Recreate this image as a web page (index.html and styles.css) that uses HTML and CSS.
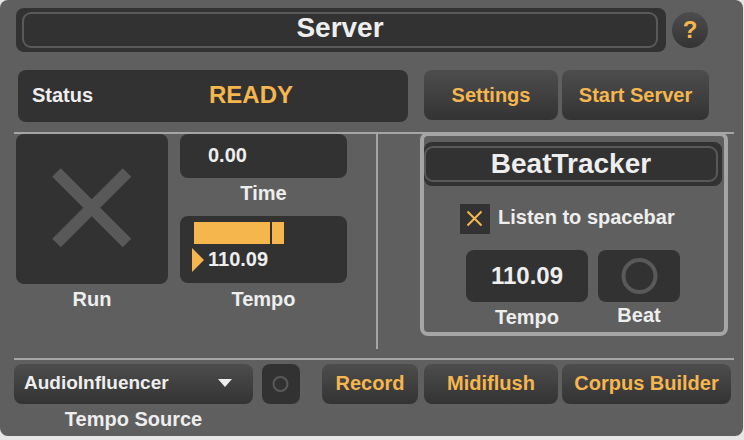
FILE: index.html
```html
<!DOCTYPE html>
<html lang="en">
<head>
<meta charset="utf-8">
<title>Server</title>
<link rel="stylesheet" href="styles.css">
</head>
<body>
<main class="panel">
  <header class="header">
    <div class="title"><h1 class="title-text server-text">Server</h1></div>
    <button class="button help" type="button" aria-label="Help">?</button>
  </header>

  <section class="status-row">
    <div class="status">
      <span class="status-label">Status</span>
      <output class="status-value">READY</output>
    </div>
    <button class="button medium" type="button">Settings</button>
    <button class="button start" type="button">Start Server</button>
  </section>

  <section class="body">
    <div class="run">
      <span class="toggle run-toggle">
        <input class="toggle-input" type="checkbox" id="run">
        <svg class="toggle-mark" viewBox="0 0 152 150" aria-hidden="true"><path d="M40.500 38.500L111 109M111 38.500L40.500 109" stroke="#595959" stroke-width="12"/></svg>
      </span>
      <label class="label" for="run">Run</label>
    </div>

    <div class="fields">
      <input class="number time" id="time" type="text" value="0.00">
      <label class="label time-label" for="time">Time</label>
      <div class="tempo">
        <div class="meter"><span class="meter-fill"></span><span class="meter-knob"></span></div>
        <div class="tempo-line">
          <svg class="tempo-arrow" viewBox="0 0 12 24" aria-hidden="true"><path d="M0 0L12 12L0 24Z" fill="#f6b64e"/></svg>
          <input class="number tempo-input" id="tempo" type="text" value="110.09">
        </div>
      </div>
      <label class="label" for="tempo">Tempo</label>
    </div>

    <div class="separator"></div>

    <section class="tracker">
      <div class="title tracker-title"><h2 class="title-text">BeatTracker</h2></div>
      <div class="listen">
        <span class="toggle listen-toggle">
          <input class="toggle-input" type="checkbox" id="listen" checked>
          <svg class="toggle-mark" viewBox="0 0 30 30" aria-hidden="true"><path d="M7.500 7.500L21.500 21.500M21.500 7.500L7.500 21.500" stroke="#f6b64e" stroke-width="2"/></svg>
        </span>
        <label class="listen-label" for="listen">Listen to spacebar</label>
      </div>
      <div class="beat-row">
        <div class="beat-tempo">
          <input class="number beat-input" id="beat-tempo" type="text" value="110.09">
          <label class="label" for="beat-tempo">Tempo</label>
        </div>
        <div class="beat">
          <button class="bang beat-bang" id="beat" type="button">
            <svg class="beat-ring" viewBox="0 0 36 36" aria-hidden="true"><circle cx="18.500" cy="18" r="16" fill="none" stroke="#595959" stroke-width="4"/></svg>
          </button>
          <label class="label beat-label" for="beat">Beat</label>
        </div>
      </div>
    </section>
  </section>

  <footer class="footer">
    <div class="source">
      <div class="source-box">
        <select class="source-select" id="source"><option>AudioInfluencer</option></select>
        <svg class="source-arrow" viewBox="0 0 14 8" aria-hidden="true"><path d="M0 0H14L7 8Z" fill="#eee"/></svg>
      </div>
      <label class="label" for="source">Tempo Source</label>
    </div>
    <button class="bang source-bang" type="button" aria-label="Refresh">
      <svg class="source-ring" viewBox="0 0 16 16" aria-hidden="true"><circle cx="7.500" cy="8" r="7" fill="none" stroke="#595959" stroke-width="2"/></svg>
    </button>
    <button class="button record" type="button">Record</button>
    <button class="button medium" type="button">Midiflush</button>
    <button class="button corpus" type="button">Corpus Builder</button>
  </footer>
</main>
</body>
</html>
```
FILE: styles.css
```css
:root {
  --surface: #5f5f5f;
  --dark: #323232;
  --line: #a5a5a5;
  --ring: #595959;
  --text: #eee;
  --accent: #f6b64e;
  --raised: linear-gradient(#4d4d4d, #333);
}

* {
  box-sizing: border-box;
}

body {
  margin: 0;
  background: #e6e6e6;
  color: var(--text);
  font: bold 20px/24px "Liberation Sans", Arial, sans-serif;
}

button,
input,
select {
  margin: 0;
  border: 0;
  padding: 0;
  color: inherit;
  font: inherit;
}

svg {
  display: block;
  overflow: visible;
}

.panel {
  margin: 0 1px 4px 0;
  border-radius: 8px;
  padding-top: 8px;
  background: var(--surface);
}

.header {
  display: flex;
  align-items: center;
  gap: 6px;
  padding: 0 35px 0 16px;
}

.title {
  flex: 1;
  border-radius: 8px;
  padding: 4px 8px 4px 6px;
  background: var(--dark);
}

.title-text {
  margin: 0;
  border: 2px solid var(--ring);
  border-radius: 9px;
  font-size: 28px;
  line-height: 32px;
  text-align: center;
}

.server-text {
  padding-bottom: 4px;
  line-height: 28px;
}

.button {
  height: 40px;
  border-radius: 8px;
  padding-bottom: 2px;
  background: var(--raised);
  color: var(--accent);
}

.help {
  width: 36px;
  height: 36px;
  border-radius: 50%;
  padding: 0;
  font-size: 24px;
}

.status-row {
  display: flex;
  gap: 4px;
  margin: 18px 34px 10px 18px;
}

.status-row .button {
  height: 50px;
  padding: 0;
}

.status {
  display: flex;
  align-items: center;
  flex: 1;
  height: 52px;
  margin-right: 12px;
  border-radius: 8px;
  padding: 0 0 2px 14px;
  background: var(--dark);
}

.status-label {
  width: 177px;
}

.status-value {
  color: var(--accent);
  font-size: 24px;
}

.medium {
  width: 134px;
}

.start {
  width: 147px;
}

.body {
  display: flex;
  margin: 0 9px 0 14px;
  border-top: 2px solid var(--line);
  border-bottom: 2px solid var(--line);
  padding-left: 2px;
}

.run,
.source,
.beat-tempo,
.beat {
  display: flex;
  flex-direction: column;
}

.label {
  margin-top: 3px;
  text-align: center;
}

.toggle {
  display: grid;
}

.toggle-input,
.toggle-mark {
  grid-area: 1 / 1;
  width: 100%;
  height: 100%;
}

.toggle-input {
  appearance: none;
  background: var(--dark);
}

.toggle-mark {
  pointer-events: none;
}

.run-toggle {
  width: 152px;
  height: 150px;
}

.run-toggle .toggle-input {
  border-radius: 8px;
}

.fields {
  display: flex;
  flex: 1;
  flex-direction: column;
  margin: 0 29px 0 12px;
}

.number {
  width: 100%;
  border-radius: 8px;
  background: var(--dark);
}

.time {
  height: 44px;
  padding: 0 28px 2px;
}

.time-label {
  margin-bottom: 11px;
}

.tempo {
  height: 67px;
  border-radius: 8px;
  padding: 6px 12px 0;
  background: var(--dark);
}

.tempo + .label {
  margin-top: 4px;
}

.meter {
  display: flex;
  gap: 2px;
  height: 22px;
  margin: 0 2px 4px;
}

.meter-fill {
  width: 76px;
  background: var(--accent);
}

.meter-knob {
  width: 12px;
  background: var(--accent);
}

.tempo-line {
  display: flex;
  gap: 4px;
}

.tempo-arrow {
  width: 12px;
  height: 24px;
}

.tempo-input {
  flex: 1;
  min-width: 0;
  height: 22px;
}

.separator {
  width: 2px;
  margin-bottom: 9px;
  background: var(--line);
}

.tracker {
  width: 308px;
  margin: -2px 6px 22px 42px;
  border: 4px solid var(--line);
  border-radius: 8px;
  padding-top: 6px;
}

.tracker-title {
  margin-right: 2px;
  padding: 4px 4px 4px 0;
}

.listen {
  display: flex;
  gap: 8px;
  margin: 18px 0 16px 36px;
}

.listen-toggle {
  width: 30px;
  height: 30px;
}

.listen-label {
  margin-top: 1px;
}

.beat-row {
  display: flex;
  gap: 10px;
  margin: 0 44px 3px 42px;
}

.beat-tempo {
  flex: 1;
}

.beat-input {
  height: 52px;
  font-size: 24px;
  text-align: center;
}

.bang {
  display: grid;
  place-items: center;
  border-radius: 8px;
  background: var(--dark);
}

.beat-bang {
  width: 82px;
  height: 52px;
}

.beat-ring {
  width: 36px;
  height: 36px;
}

.beat-label {
  margin-top: 1px;
}

.footer {
  display: flex;
  gap: 4px;
  margin: 4px 12px 0 14px;
  padding-bottom: 5px;
}

.source {
  flex: 1;
  margin-right: 5px;
}

.source-box {
  display: grid;
  align-items: center;
}

.source-select,
.source-arrow {
  grid-area: 1 / 1;
}

.source-select {
  appearance: none;
  width: 100%;
  height: 40px;
  border-radius: 8px;
  padding: 0 32px 2px 10px;
  background: var(--raised);
  font-size: 19px;
}

.source-arrow {
  justify-self: end;
  width: 14px;
  height: 8px;
  margin: 0 21px 2px 0;
  pointer-events: none;
}

.source-bang {
  width: 38px;
  height: 40px;
  margin-right: 18px;
}

.source-ring {
  width: 16px;
  height: 16px;
}

.record {
  width: 96px;
  margin-right: 2px;
}

.corpus {
  width: 169px;
}
```
